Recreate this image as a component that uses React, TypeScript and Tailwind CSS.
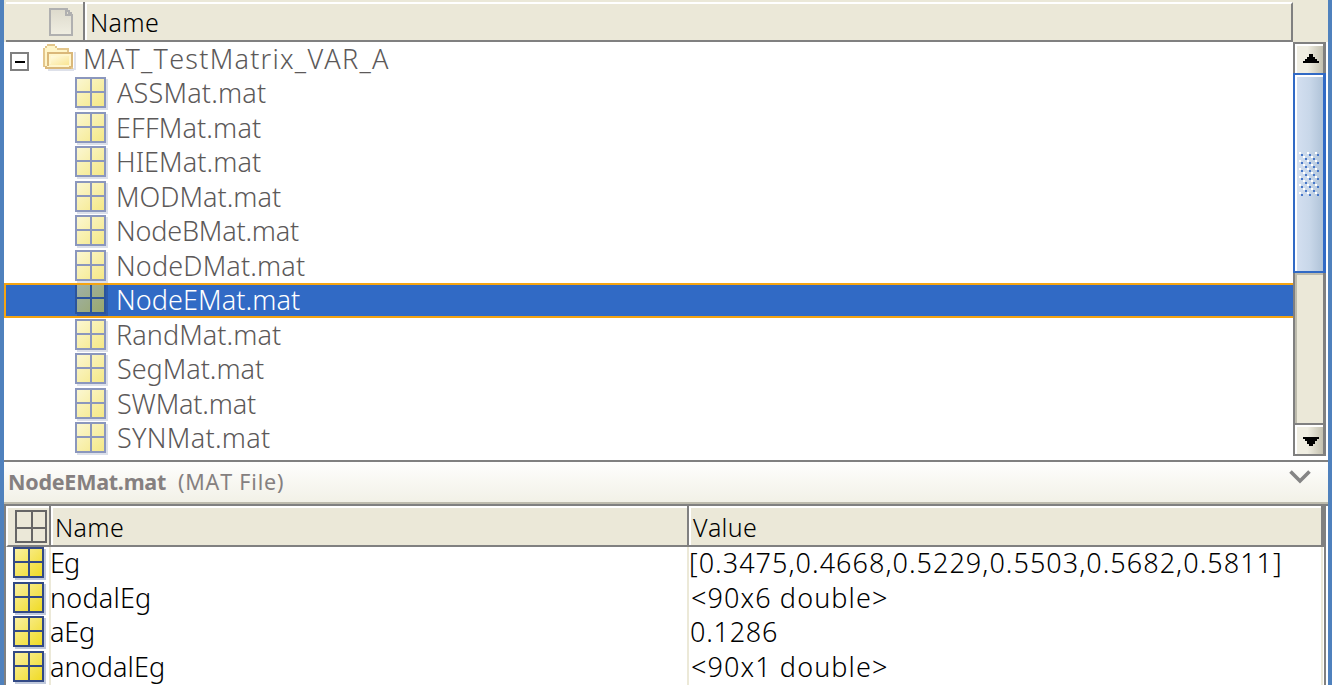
import { useLayoutEffect, useRef, useState } from "react";

const FONT = '"Noto Sans", "Open Sans", sans-serif';

/* Text whose glyphs start exactly at the box's left edge and span `width` pixels. */
function Fit({ text, width, className = "" }: { text: string; width: number; className?: string }) {
  const ref = useRef<HTMLSpanElement>(null);
  const [fit, setFit] = useState({ letterSpacing: 0, textIndent: 0 });
  useLayoutEffect(() => {
    const ctx = document.createElement("canvas").getContext("2d");
    if (!ctx || !ref.current) return;
    const cs = getComputedStyle(ref.current);
    ctx.font = `${cs.fontWeight} ${cs.fontSize} ${FONT}`;
    ctx.fontKerning = "none";
    const m = ctx.measureText(text);
    const ink = m.actualBoundingBoxLeft + m.actualBoundingBoxRight;
    setFit({ letterSpacing: (width - ink) / (text.length - 1), textIndent: m.actualBoundingBoxLeft });
  }, [text, width]);
  return (
    <span ref={ref} style={fit} className={`block shrink-0 whitespace-pre [font-kerning:none] ${className}`}>
      {text}
    </span>
  );
}

function GridIcon({ tone, id }: { tone: "soft" | "selected" | "vivid"; id: string }) {
  const c = {
    soft: { a: "#fbf7d2", b: "#f5e886", line: "#8b97bd", shadow: "#dce0ea" },
    selected: { a: "#9fb1a8", b: "#9aa86c", line: "#2b549c", shadow: "#2d5aaa" },
    vivid: { a: "#faf0a0", b: "#f0db25", line: "#334a86", shadow: "#c0c9dc" },
  }[tone];
  return (
    <svg width="33" height="33" viewBox="0 0 33 33" className="block shrink-0" shapeRendering="crispEdges">
      <defs>
        <linearGradient id={id} x1="0" y1="0" x2="1" y2="1">
          <stop offset="0" stopColor={c.a} />
          <stop offset="1" stopColor={c.b} />
        </linearGradient>
      </defs>
      <path d="M2 2h31v31H2z" fill={c.shadow} />
      <path d="M0 0h31v31H0z" fill={c.line} />
      <path d="M2 2h13v12H2zM17 2h12v12H17zM2 16h13v13H2zM17 16h12v13H17z" fill={`url(#${id})`} />
    </svg>
  );
}

const files: [string, number][] = [
  ["ASSMat.mat", 149],
  ["EFFMat.mat", 143],
  ["HIEMat.mat", 143],
  ["MODMat.mat", 163],
  ["NodeBMat.mat", 181],
  ["NodeDMat.mat", 187],
  ["NodeEMat.mat", 182],
  ["RandMat.mat", 163],
  ["SegMat.mat", 146],
  ["SWMat.mat", 138],
  ["SYNMat.mat", 152],
];

const variables: [string, number, string, number][] = [
  ["Eg", 26, "[0.3475,0.4668,0.5229,0.5503,0.5682,0.5811]", 589],
  ["nodalEg", 97, "<90x6 double>", 194],
  ["aEg", 42, "0.1286", 86],
  ["anodalEg", 112, "<90x1 double>", 194],
];

function TreeHeader() {
  return (
    <div className="flex h-[42px] bg-[#ebe8d8] pt-[2px]">
      <div className="ml-[2px] flex w-[77px] shrink-0 justify-end border-t-2 border-b-2 border-t-white border-b-[#808080] pr-[10px] pt-[4px]">
        <svg width="24" height="28" viewBox="0 0 24 28" shapeRendering="crispEdges">
          <defs>
            <linearGradient id="page" x1="0" y1="0" x2="0" y2="1">
              <stop offset="0" stopColor="#dddacc" />
              <stop offset="1" stopColor="#f0eee2" />
            </linearGradient>
          </defs>
          <path d="M1 1h17v2h2v2h2v2h1v20H1z" fill="url(#page)" stroke="#b0b0b0" strokeWidth="2" />
          <path d="M17 1v6h6" fill="none" stroke="#b0b0b0" strokeWidth="2" />
        </svg>
      </div>
      <div className="w-[2px] bg-[#808080]" />
      <div className="w-[1208px] border-t-2 border-r-2 border-b-2 border-t-white border-r-[#808080] border-b-[#808080]">
        <div className="h-full border-l-2 border-white pl-[5px]">
          <Fit text="Name" width={66} className="text-[25px] font-[350] leading-[36px] text-black" />
        </div>
      </div>
    </div>
  );
}

function FolderRow() {
  return (
    <div className="flex h-[34px] pl-[6px] text-[#5c5959]">
      <svg width="19" height="19" viewBox="0 0 19 19" className="mt-[10px] block shrink-0" shapeRendering="crispEdges">
        <path d="M1 1h17v17H1z" fill="#fff" stroke="#808080" strokeWidth="2" />
        <path d="M5 9h10v2H5z" fill="#000" />
      </svg>
      <svg width="33" height="28" viewBox="0 0 33 28" className="ml-[14px] mt-[2px] block shrink-0" shapeRendering="crispEdges">
        <defs>
          <linearGradient id="folder" x1="0" y1="0" x2="1" y2="1">
            <stop offset="0" stopColor="#fffbe2" />
            <stop offset="1" stopColor="#fae594" />
          </linearGradient>
        </defs>
        <path d="M5 24h26V8h2v18h-2v1H5z" fill="#dee1ea" />
        <path d="M2 2h2V0h8v2h2v2h12v4h4v17H2v-2H0V4h2z" fill="#e3c68c" />
        <path d="M4 2h8v2h2v2h10v2H6v14H2V4h2z" fill="#fff5c8" />
        <path d="M4 8h26v15h-2v2H2v-3h2z" fill="#dab87a" />
        <path d="M6 10h22v12h-2v1H4v-1h2z" fill="#fff6cc" />
        <path d="M8 12h18v9H6v-1h2z" fill="url(#folder)" />
      </svg>
      <Fit text="MAT_TestMatrix_VAR_A" width={304} className="ml-[9px] text-[27px] font-[350] leading-[34px]" />
    </div>
  );
}

function FileRow({ name, width, selected, index }: { name: string; width: number; selected: boolean; index: number }) {
  return (
    <div className="h-[34.5px] shrink-0">
      <div
        className={
          selected
            ? "flex h-[35px] border-y-2 border-l-2 border-[#f5a412] bg-[#316ac5] pl-[69px] text-white"
            : "flex h-[34.5px] pl-[71px] text-[#5c5959]"
        }
      >
        <div className={selected ? "h-[31px] overflow-hidden" : "mt-[1px]"}>
          <div className={selected ? "-mt-[2px]" : ""}>
            <GridIcon tone={selected ? "selected" : "soft"} id={`file${index}`} />
          </div>
        </div>
        <Fit
          text={name}
          width={width}
          className={
            selected
              ? "-mt-[2px] ml-[10px] text-[27px] font-[350] leading-[34.5px]"
              : index === 0
                ? "ml-[9px] text-[27px] font-[350] leading-[34.5px]"
                : "ml-[10px] text-[27px] font-[350] leading-[34.5px]"
          }
        />
      </div>
    </div>
  );
}

function ScrollBar() {
  const dots: number[] = [0, 1, 2, 3, 4, 5];
  return (
    <div className="flex w-[35px] shrink-0 flex-col">
      <div className="h-[31px] w-[33px] border-t-2 border-r-[3px] border-l-2 border-[#808080]">
        <div className="flex h-full border-t-2 border-l-2 border-white bg-linear-to-r from-[#f0eee2] from-40% to-[#c4c1b0] pt-[8px] pl-[6px]">
          <svg width="16" height="9" viewBox="0 0 16 9" shapeRendering="crispEdges">
            <path d="M6 0h4v3h2v2h2v2h2v2H0V7h2V5h2V3h2z" fill="#000" />
          </svg>
        </div>
      </div>
      <div className="h-[200px] w-[33px] border-y-2 border-r-[3px] border-l-2 border-[#316ac5]">
        <div className="flex h-full border-t-2 border-l-2 border-white bg-linear-to-r from-[#d3dff0] via-[#c8d7e9] to-[#b0c3d8] pl-[2px] pt-[75px]">
          <svg width="22" height="46" viewBox="0 0 22 46" shapeRendering="crispEdges">
            {dots.map((r) =>
              [0, 8, 16].map((x) => (
                <g key={`${r}-${x}`}>
                  <rect x={x} y={r * 8} width="2" height="2" fill="#fff" />
                  <rect x={x + 2} y={r * 8 + 2} width="2" height="2" fill="#4777c8" />
                  {x < 16 && r < 5 && (
                    <>
                      <rect x={x + 4} y={r * 8 + 4} width="2" height="2" fill="#fff" />
                      <rect x={x + 6} y={r * 8 + 6} width="2" height="2" fill="#4777c8" />
                    </>
                  )}
                </g>
              )),
            )}
          </svg>
        </div>
      </div>
      <div className="h-[150px] w-[33px] border-r-[3px] border-l-2 border-[#808080]">
        <div className="h-full border-t-2 border-l-2 border-[#bdbbad] bg-[#ebe8d8]" />
      </div>
      <div className="h-[33px] w-[33px] border-y-2 border-r-[3px] border-l-2 border-[#808080]">
        <div className="flex h-full border-t-2 border-l-2 border-white bg-linear-to-r from-[#f0eee2] from-40% to-[#c4c1b0] pt-[10px] pl-[6px]">
          <svg width="16" height="9" viewBox="0 0 16 9" shapeRendering="crispEdges">
            <path d="M0 0h16v2h-2v2h-2v3h-2v2H6V7H4V4H2V2H0z" fill="#000" />
          </svg>
        </div>
      </div>
    </div>
  );
}

function DetailBar() {
  return (
    <div className="flex h-[44px] border-t-2 border-b-2 border-t-[#808080] border-b-[#bdbbad] bg-linear-to-b from-[#fefefd] to-[#f2f1e7] pl-[5px] text-[#858080]">
      <Fit text="NodeEMat.mat" width={157} className="mr-[12px] w-[157px] text-[21.5px] font-bold leading-[39px]" />
      <Fit text="(MAT File)" width={105} className="text-[21.5px] leading-[39px]" />
      <svg width="22" height="14" viewBox="0 0 22 14" className="mt-[8px] mr-[17px] ml-auto block">
        <path d="M1.5 1.5L11 11l9.500-9.500" fill="none" stroke="#858585" strokeWidth="3.600" />
      </svg>
    </div>
  );
}

function VariableTable() {
  return (
    <div className="flex h-[181px] w-[1324px] border-t-2 border-l-2 border-[#808080] text-black">
      <div className="w-[1315px] shrink-0">
        <div className="flex h-[41px]">
          <div className="w-[43px] border-t-2 border-b-2 border-l-2 border-t-white border-b-[#808080] border-l-white bg-[#ebe8d8] pl-[7px] pt-[2px]">
            <svg width="32" height="33" viewBox="0 0 32 33" shapeRendering="crispEdges">
              <path d="M1 1h30v31H1zM17 1v31M1 18h30" fill="none" stroke="#666" strokeWidth="2" />
            </svg>
          </div>
          <div className="w-[2px] bg-[#808080]" />
          <div className="w-[636px] border-t-2 border-b-2 border-t-white border-b-[#808080] bg-[#ebe8d8]">
            <div className="h-full border-l-2 border-white pl-[4px]">
              <Fit text="Name" width={66} className="text-[25px] font-[350] leading-[38px]" />
            </div>
          </div>
          <div className="w-[2px] bg-[#808080]" />
          <div className="w-[632px] border-t-2 border-b-2 border-t-white border-b-[#808080] bg-[#ebe8d8]">
            <div className="h-full border-l-2 border-white pl-[2px]">
              <Fit text="Value" width={63} className="text-[25px] font-[350] leading-[38px]" />
            </div>
          </div>
        </div>
        {variables.map(([name, nameWidth, value, valueWidth], i) => (
          <div key={name} className="flex h-[34.5px] text-[27px] font-[350] leading-[32px]">
            <div className="w-[43px] shrink-0 pl-[7px]">
              <GridIcon tone="vivid" id={`var${i}`} />
            </div>
            <div className="w-[638px] shrink-0 border-l-2 border-[#ece9d8]">
              <Fit text={name} width={nameWidth} className={i < 2 ? "pl-[1px]" : ""} />
            </div>
            <div className={value.startsWith("<") ? "flex shrink-0 grow border-l-2 border-[#ece9d8] pl-[3px]" : "flex shrink-0 grow border-l-2 border-[#ece9d8] pl-[2px]"}>
              <Fit text={value} width={valueWidth} />
            </div>
          </div>
        ))}
      </div>
      <div className="flex w-[5px] shrink-0 flex-col">
        <div className="h-[41px] bg-[#808080]" />
        <div className="grow border-r-2 border-l-2 border-r-[#808080] border-l-[#ece9d8]" />
      </div>
    </div>
  );
}

export default function App() {
  return (
    <div className="flex h-[685px] w-[1332px] flex-col overflow-hidden border-x-4 border-[#4f81bd] bg-white font-['Noto_Sans','Open_Sans',sans-serif]">
      <TreeHeader />
      <div className="flex h-[418px] shrink-0">
        <div className="flex w-[1289px] shrink-0 flex-col">
          <FolderRow />
          {files.map(([name, width], i) => (
            <FileRow key={name} name={name} width={width} selected={name === "NodeEMat.mat"} index={i} />
          ))}
        </div>
        <ScrollBar />
      </div>
      <DetailBar />
      <VariableTable />
    </div>
  );
}
